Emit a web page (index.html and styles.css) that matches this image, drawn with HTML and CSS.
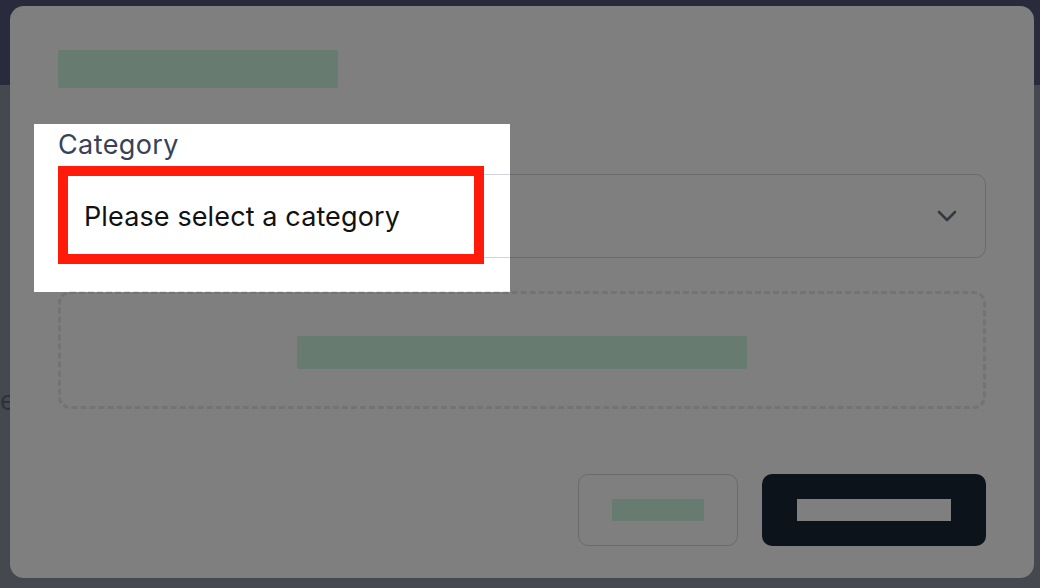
FILE: index.html
```html
<!DOCTYPE html>
<html lang="en">
<head>
    <meta charset="UTF-8">
    <meta name="viewport" content="width=device-width, initial-scale=1.0">
    <title>New item</title>
    <link rel="stylesheet" href="styles.css">
</head>
<body>

<div class="page">
    <header class="topbar"></header>
    <main class="content">
        <p class="content-text">e</p>
    </main>
</div>

<!-- Modal -->
<div class="modal">
    <div class="modal-title"></div>

    <div class="field">
        <label class="field-label" for="category">Category</label>
        <div class="select-box" id="category">
            <span>Please select a category</span>
            <svg class="chevron" width="20" height="12" viewBox="0 0 20 12">
                <path d="M2 2 L10 10 L18 2" fill="none" stroke="#6b7280" stroke-width="2.6" stroke-linecap="round" stroke-linejoin="round"/>
            </svg>
        </div>

        <!-- zona resaltada + marco rojo -->
        <div class="spotlight"></div>
        <div class="marker"></div>
    </div>

    <div class="dropzone">
        <div class="dropzone-text"></div>
    </div>

    <div class="modal-footer">
        <button class="btn btn-cancel"><span class="redact"></span></button>
        <button class="btn btn-primary"><span class="redact-light"></span></button>
    </div>
</div>

</body>
</html>
```

FILE: styles.css
```css
body {
    font-family: Inter, "Noto Sans", Arial, sans-serif;
    margin: 0;
    padding: 0;
    background-color: #8a909c;
}

.topbar {
    height: 85px;
    background-color: #525678;
}

.content {
    padding-top: 300px;
}

.content-text {
    margin: 0;
    font-size: 26px;
    line-height: 32px;
    color: #5e6274;
}

.modal {
    position: fixed;
    top: 6px;
    left: 10px;
    width: 1024px;
    height: 572px;
    box-sizing: border-box;
    padding: 44px 48px 32px;
    background-color: white;
    border-radius: 14px;
}

.modal-title {
    width: 280px;
    height: 38px;
    background-color: #d0f6e0;
    border-radius: 2px;
}

.field {
    position: relative;
    margin-top: 40px;
}

.field-label {
    display: block;
    font-size: 27px;
    line-height: 34px;
    letter-spacing: 0.4px;
    color: #374258;
    margin-bottom: 12px;
}

.select-box {
    display: flex;
    align-items: center;
    justify-content: space-between;
    height: 84px;
    box-sizing: border-box;
    padding: 0 28px 0 25px;
    border: 1px solid #d1d5db;
    border-radius: 10px;
    font-size: 27px;
    letter-spacing: 0.12px;
    color: #111111;
}

.chevron {
    display: block;
}

/* Resaltado sobre el campo */
.spotlight {
    position: absolute;
    left: -24px;
    top: -4px;
    width: 476px;
    height: 168px;
    box-shadow: 0 0 0 2000px rgba(0, 0, 0, 0.5);
    z-index: 10;
}

.marker {
    position: absolute;
    left: 0;
    top: 38px;
    width: 426px;
    height: 98px;
    box-sizing: border-box;
    border: 10px solid #ff1a0a;
    z-index: 11;
}

.dropzone {
    display: flex;
    align-items: center;
    justify-content: center;
    margin-top: 33px;
    height: 118px;
    box-sizing: border-box;
    border: 3px dashed #e5e7eb;
    border-radius: 12px;
}

.dropzone-text {
    width: 450px;
    height: 33px;
    margin-top: 4px;
    background-color: #d0f6e0;
    border-radius: 2px;
}

.modal-footer {
    display: flex;
    justify-content: flex-end;
    gap: 24px;
    margin-top: 65px;
}

.btn {
    display: flex;
    align-items: center;
    justify-content: center;
    height: 72px;
    padding: 0;
    border-radius: 10px;
    cursor: pointer;
}

.btn-cancel {
    width: 160px;
    background-color: white;
    border: 1px solid #d1d5db;
}

.btn-primary {
    width: 224px;
    background-color: #1a2636;
    border: none;
}

.redact {
    display: block;
    width: 92px;
    height: 22px;
    background-color: #d0f6e0;
}

.redact-light {
    display: block;
    width: 154px;
    height: 22px;
    background-color: white;
}
```
